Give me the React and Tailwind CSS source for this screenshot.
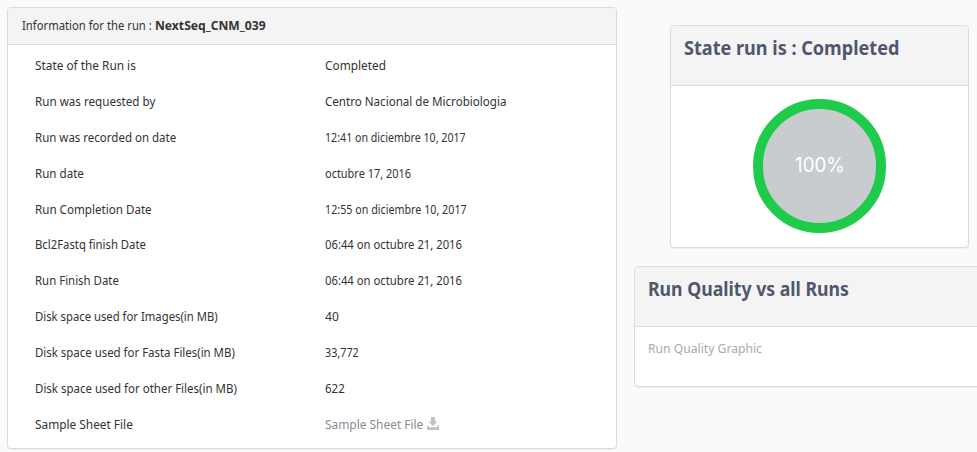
import React, { useLayoutEffect, useRef, useState } from "react";

const rows = [
  { label: "State of the Run is", labelWidth: 101, value: "Completed", valueWidth: 61 },
  { label: "Run was requested by", labelWidth: 120, value: "Centro Nacional de Microbiologia", valueWidth: 181 },
  { label: "Run was recorded on date", labelWidth: 141.5, value: "12:41 on diciembre 10, 2017", valueWidth: 141 },
  { label: "Run date", labelWidth: 49, value: "octubre 17, 2016", valueWidth: 86 },
  { label: "Run Completion Date", labelWidth: 117, value: "12:55 on diciembre 10, 2017", valueWidth: 142, short: true },
  { label: "Bcl2Fastq finish Date", labelWidth: 110.5, value: "06:44 on octubre 21, 2016", valueWidth: 137 },
  { label: "Run Finish Date", labelWidth: 83.5, value: "06:44 on octubre 21, 2016", valueWidth: 137 },
  { label: "Disk space used for Images(in MB)", labelWidth: 182.5, value: "40", valueWidth: 14 },
  { label: "Disk space used for Fasta Files(in MB)", labelWidth: 199.5, value: "33,772", valueWidth: 34 },
  { label: "Disk space used for other Files(in MB)", labelWidth: 201.5, value: "622", valueWidth: 19.5 },
];

// One line of text, condensed horizontally to the given width.
function Fit({ width, className = "", children }) {
  const ref = useRef(null);
  const [scale, setScale] = useState(1);
  useLayoutEffect(() => {
    setScale(width / ref.current.offsetWidth);
  }, [width]);
  return (
    <span className={`inline-block whitespace-nowrap ${className}`} style={{ width }}>
      <span ref={ref} className="inline-block origin-left" style={{ transform: `scaleX(${scale})` }}>
        {children}
      </span>
    </span>
  );
}

function DownloadIcon() {
  return (
    <svg className="mt-[11px] ml-1 h-[13px] w-3 shrink-0" viewBox="0 0 12 13" fill="#bfc1c7">
      <path d="M4 0h4v4.500h2.500L6 9 1.500 4.500H4zM0 8.500h1.500v1.800h9V8.500H12V13H0z" />
    </svg>
  );
}

function Card({ className, header, children }) {
  return (
    <section className={`overflow-hidden rounded border border-[#dcdcdc] bg-white shadow-[0_1px_1px_rgba(0,0,0,0.05)] ${className}`}>
      {header}
      {children}
    </section>
  );
}

function CardTitle({ width, children }) {
  return (
    <header className="h-[60px] border-b border-[#dcdcdc] bg-[#f4f4f4] pt-2 pl-[13px]">
      <h2 className="text-[19px] leading-7 font-bold text-[#50566c]">
        <Fit width={width}>{children}</Fit>
      </h2>
    </header>
  );
}

export default function App() {
  return (
    <main className="flex h-[452px] w-[977px] overflow-hidden bg-[#fafafa] font-['Noto_Sans',sans-serif] text-[13px] text-[#333]">
      <Card
        className="mt-[7px] ml-[7px] h-[442px] w-[610px] shrink-0"
        header={
          <header className="flex h-[37px] gap-[3px] border-b border-[#dcdcdc] bg-[#f4f4f4] pl-3.5 leading-[34px]">
            <Fit width={130}>Information for the run :</Fit>
            <Fit width={111} className="font-bold">NextSeq_CNM_039</Fit>
          </header>
        }
      >
        <div className="pt-0.5 pl-[27px] leading-9">
          {rows.map(({ label, labelWidth, value, valueWidth, short }) => (
            <div key={label} className={`flex ${short ? "h-[35px]" : "h-9"}`}>
              <div className="w-[290px]">
                <Fit width={labelWidth}>{label}</Fit>
              </div>
              <Fit width={valueWidth}>{value}</Fit>
            </div>
          ))}
          <div className="flex h-9">
            <div className="w-[290px]">
              <Fit width={97.5}>Sample Sheet File</Fit>
            </div>
            <Fit width={98} className="text-[#888b93]">Sample Sheet File</Fit>
            <DownloadIcon />
          </div>
        </div>
      </Card>
      <div className="ml-[17px] flex shrink-0 flex-col">
        <Card className="mt-[25px] ml-9 h-[223px] w-[299px]" header={<CardTitle width={215}>State run is : Completed</CardTitle>}>
          <div className="mt-[13px] ml-[82px] flex h-[134px] w-[133px] items-center justify-center rounded-full border-10 border-[#1fcb4a] bg-[#c8cccf] font-[Inter,sans-serif] text-[19.5px] font-normal text-white">
            <Fit width={50}>100%</Fit>
          </div>
        </Card>
        <Card className="mt-[18px] h-[121px] w-[360px]" header={<CardTitle width={201}>Run Quality vs all Runs</CardTitle>}>
          <p className="pt-[11px] pl-[13px] leading-5 text-[#a9a9ad]">
            <Fit width={114}>Run Quality Graphic</Fit>
          </p>
        </Card>
      </div>
    </main>
  );
}
